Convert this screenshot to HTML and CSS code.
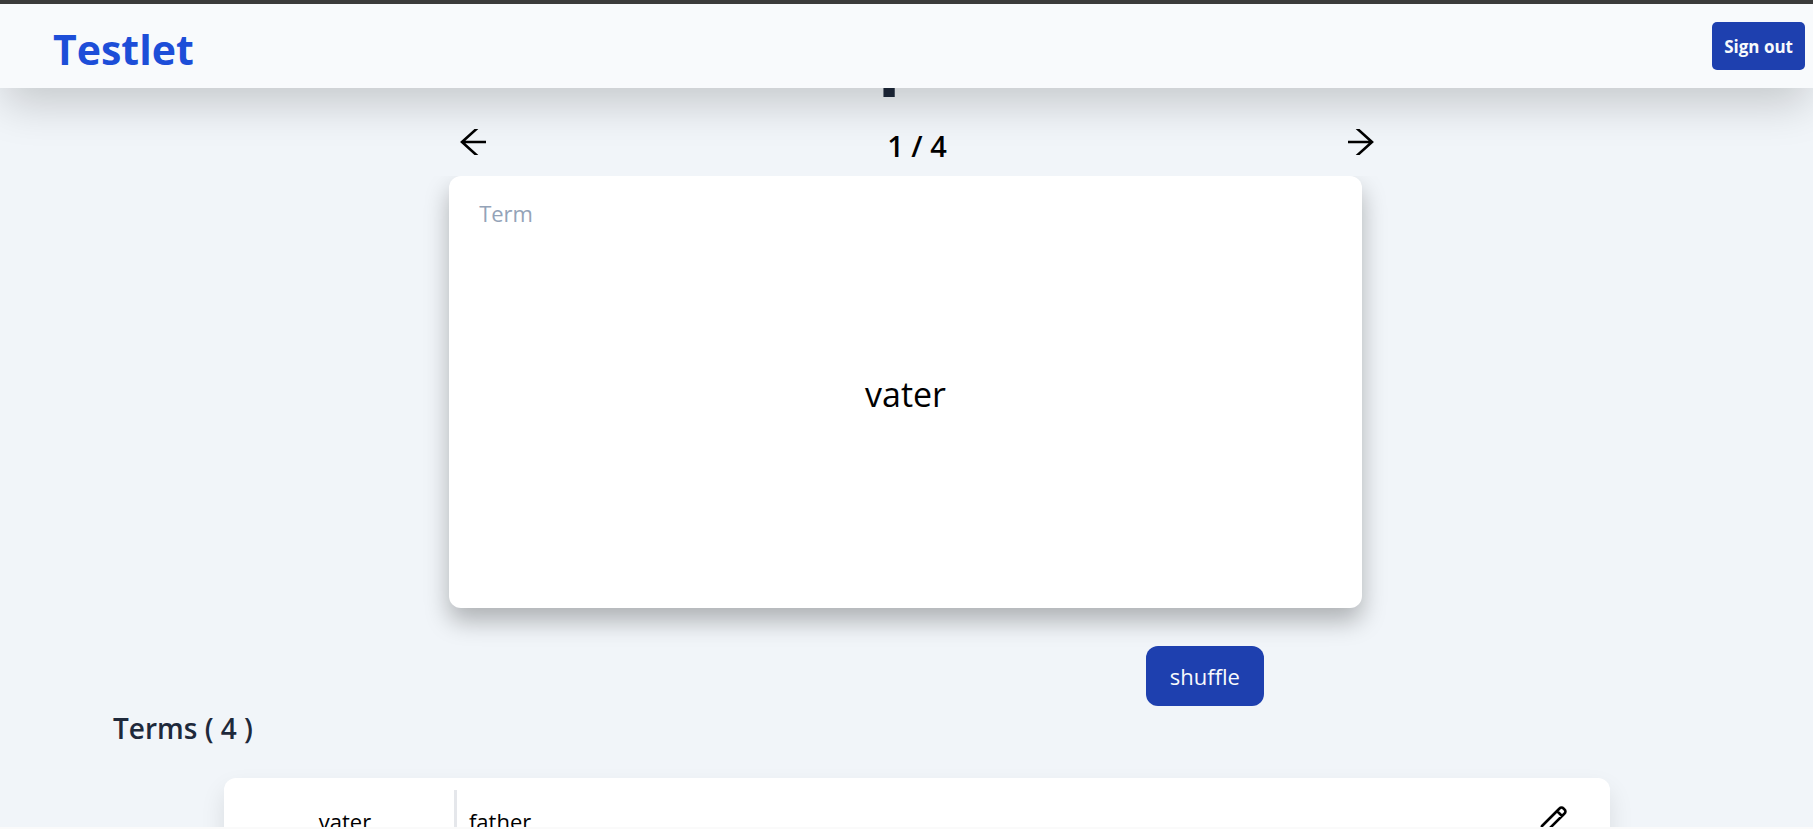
FILE: index.html
```html
<!DOCTYPE html>
<html lang="en">
<head>
<meta charset="utf-8">
<title>Testlet</title>
<link rel="stylesheet" href="styles.css">
</head>
<body>
<header class="header">
  <a class="brand" href="#">Testlet</a>
  <button class="sign-out" type="button">Sign out</button>
</header>
<main class="main">
  <h1 class="set-title">p</h1>
  <section class="deck">
    <div class="pager">
      <button class="arrow" type="button" aria-label="Previous card">
        <svg viewBox="0 0 26 26"><path d="M26 13H2M17.5 -1L2 13L17.5 27"/></svg>
      </button>
      <span class="count">1 / 4</span>
      <button class="arrow" type="button" aria-label="Next card">
        <svg viewBox="0 0 26 26"><path d="M0 13H24M8.5 -1L24 13L8.5 27"/></svg>
      </button>
    </div>
    <article class="card">
      <span class="card-label">Term</span>
      <p class="card-word">vater</p>
    </article>
    <div class="actions">
      <button class="shuffle" type="button">shuffle</button>
    </div>
  </section>
  <section class="terms">
    <h2 class="terms-title">Terms ( 4 )</h2>
    <div class="term-row">
      <span class="term">vater</span>
      <span class="definition">father</span>
      <button class="edit" type="button" aria-label="Edit term">
        <svg viewBox="0 0 28 28"><path d="M3 20L20.5 2.5A2.6 2.6 0 0 1 24.5 2.5L25.5 3.5A2.6 2.6 0 0 1 25.5 7.5L8 25L1.5 26.5ZM18 5L23 10"/></svg>
      </button>
    </div>
  </section>
</main>
</body>
</html>
```
FILE: styles.css
```css
* { box-sizing: border-box; }
body {
  margin: 0;
  height: 100vh;
  display: flex;
  flex-direction: column;
  overflow: hidden;
  border-top: 4px solid #3b3b3b;
  border-bottom: 2px solid #fafafa;
  background: #f1f5f9;
  color: #000;
  font-family: "Segoe UI", "Open Sans", "Noto Sans", sans-serif;
}
button { border: 0; padding: 0; font-family: inherit; cursor: pointer; }
h1, h2, p { margin: 0; }
.header {
  position: relative;
  z-index: 1;
  flex: none;
  display: flex;
  align-items: center;
  justify-content: space-between;
  height: 84px;
  padding: 0 8px 0 53px;
  background: #f8fafc;
  box-shadow: 0 20px 44px -4px rgba(0, 0, 0, 0.18);
}
.brand { color: #1d4ed8; font-size: 41px; font-weight: 700; text-decoration: none; line-height: 56px; padding-top: 6px; }
.sign-out {
  height: 48px;
  padding: 0 12px;
  border-radius: 5px;
  background: #1e40af;
  color: #f8fafc;
  font-size: 17px;
  font-weight: 700;
}
.main { flex: 1; min-height: 0; overflow: hidden; padding-right: 2px; }
.set-title {
  height: 36px;
  display: flex;
  align-items: flex-end;
  justify-content: center;
  padding: 0 8px 32px 0;
  color: #1e293b;
  font-size: 76px;
  font-weight: 700;
  line-height: 84px;
}
.deck { width: 50.4%; margin: 0 auto; }
.pager { display: flex; align-items: center; justify-content: space-between; height: 52px; margin: 0 -12px 0 11px; }
.arrow { width: 26px; height: 26px; margin-bottom: 16px; background: none; }
.arrow svg, .edit svg { display: block; width: 100%; height: 100%; fill: none; stroke: #000; stroke-width: 2.6; }
.count { font-size: 29px; font-weight: 600; line-height: 36px; margin-bottom: 8px; }
.card {
  position: relative;
  display: flex;
  align-items: center;
  justify-content: center;
  height: 432px;
  border-radius: 12px;
  background: #fff;
  box-shadow: 0 13px 24px rgba(0, 0, 0, 0.28);
  clip-path: inset(0 -40px -60px -40px);
}
.card-label { position: absolute; top: 21px; left: 30px; color: #94a3b8; font-size: 22px; line-height: 32px; }
.card-word { font-size: 34px; line-height: 44px; padding-top: 4px; }
.actions { display: flex; justify-content: flex-end; padding: 38px 98px 0 0; }
.shuffle { height: 60px; padding: 0 24px; border-radius: 12px; background: #1e40af; color: #f8fafc; font-size: 22px; }
.terms { margin: 0 90px 0 113px; }
.terms-title { margin: 3px 0 31px; color: #1e293b; font-size: 28px; font-weight: 600; line-height: 38px; }
.term-row {
  display: grid;
  grid-template-columns: 218px 1fr 28px;
  width: 86.2%;
  height: 112px;
  margin: 0 auto;
  padding: 12px 43px 12px 12px;
  border-radius: 12px;
  background: #fff;
  box-shadow: 0 12px 24px rgba(0, 0, 0, 0.1);
  font-size: 22px;
  line-height: 32px;
}
.term { text-align: center; padding-top: 15px; }
.definition { border-left: 3px solid #e5e7eb; padding: 15px 0 0 12px; }
.edit { width: 28px; height: 28px; margin-top: 16px; background: none; }
```
